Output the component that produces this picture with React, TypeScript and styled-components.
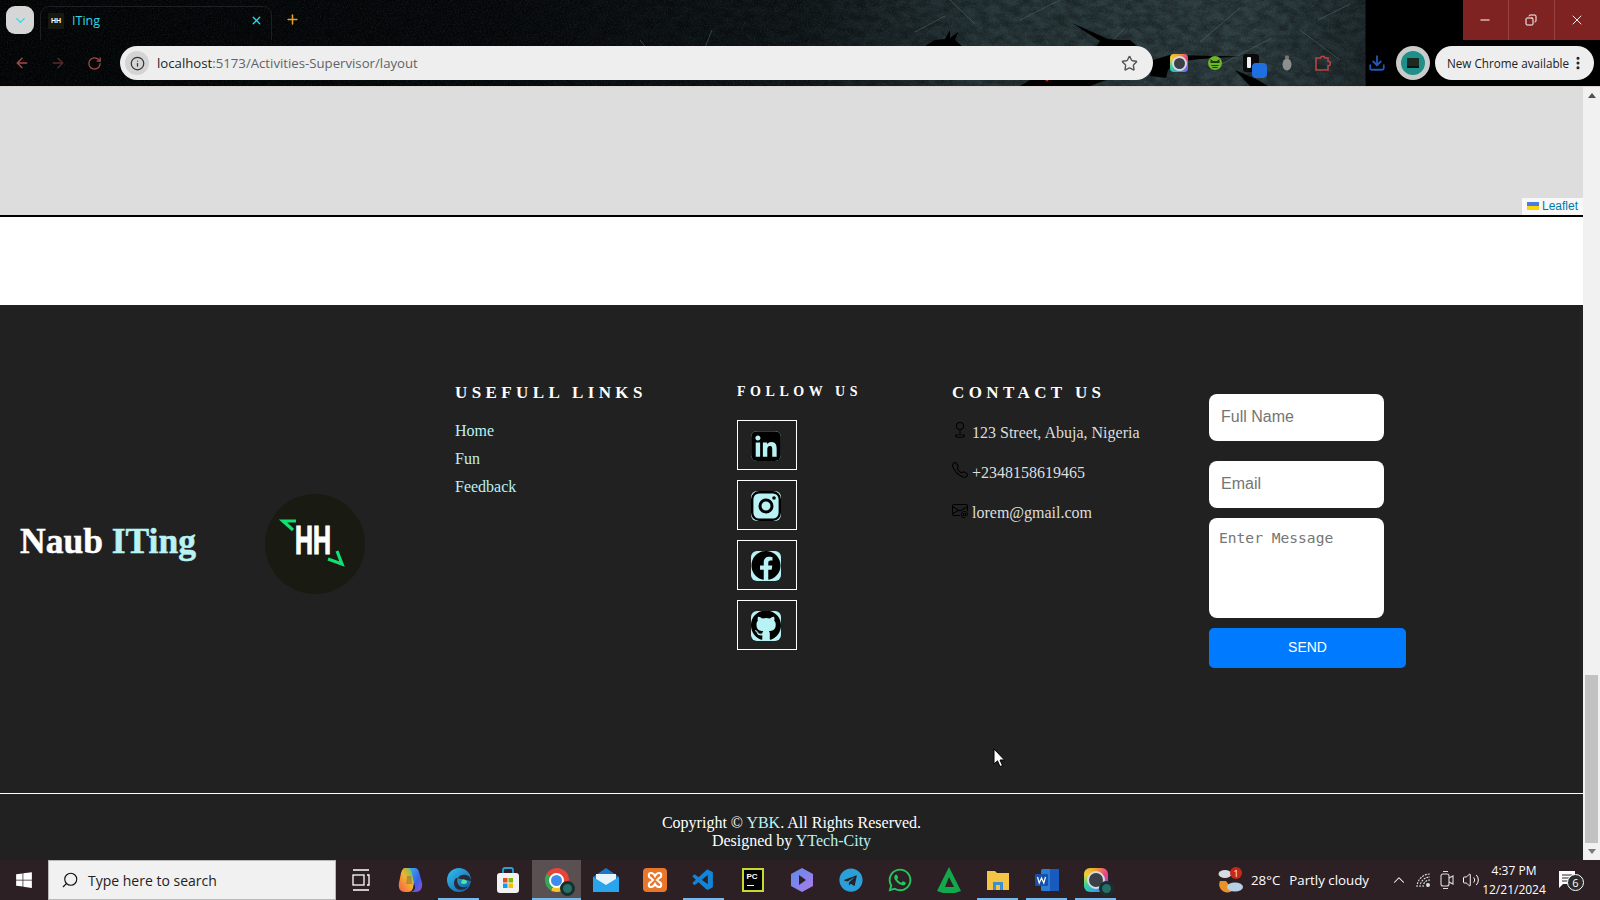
import React from 'react'
import styled, { createGlobalStyle } from 'styled-components'
import { ChevronDown, X, Plus, ArrowLeft, ArrowRight, RotateCw, Info, Star, Download, Minus, Copy, Search, ChevronUp, Volume2, MoreVertical } from 'lucide-react'
import { BsGeo, BsTelephone, BsEnvelopeAt } from 'react-icons/bs'
import { FaWindows, FaTelegram, FaWhatsapp, FaFacebook, FaGithub, FaLinkedin } from 'react-icons/fa'
import { VscVscode } from 'react-icons/vsc'

const GlobalStyle = createGlobalStyle`
  html, body {
    margin: 0;
    padding: 0;
    overflow: hidden;
    background: #212121;
  }
  * { box-sizing: border-box; }
`

const Screen = styled.div`
  width: 1600px;
  height: 900px;
  display: flex;
  flex-direction: column;
  overflow: hidden;
`

/* ---------- browser chrome ---------- */

const Chrome = styled.div`
  position: relative;
  height: 87px;
  flex: none;
  background:
    linear-gradient(90deg, #030506 0, #06090b 500px, #10171a 800px, #263538 980px, #2d3d40 1250px, #1f2b2e 1365px, #000 1366px, #000 100%);
  border-bottom: 1px solid #dcd4d0;
`

const Backdrop = styled.svg`
  position: absolute;
  inset: 0;
  width: 1600px;
  height: 86px;
`

const TabStrip = styled.div`
  position: relative;
  height: 40px;
  display: flex;
  align-items: flex-end;
  padding-left: 6px;
`

const TabMenu = styled.div`
  width: 28px;
  height: 28px;
  margin-bottom: 6px;
  border-radius: 9px;
  background: #d6d6d6;
  color: #2fd6e6;
  display: flex;
  align-items: center;
  justify-content: center;
`

const Tab = styled.div`
  width: 232px;
  height: 34px;
  margin-left: 6px;
  padding: 0 8px 6px 7px;
  display: flex;
  align-items: center;
  border: 1px solid #1b2022;
  border-bottom: 0;
  border-radius: 9px 9px 0 0;
  color: #2fd6e6;
  font: 12.5px "Open Sans", sans-serif;
`

const Favicon = styled.div`
  width: 16px;
  height: 16px;
  margin-right: 8px;
  background: #16190f;
  color: #fff;
  font: bold 7px "Liberation Sans", sans-serif;
  display: flex;
  align-items: center;
  justify-content: center;
`

const TabTitle = styled.span`
  flex: 1;
`

const NewTab = styled.div`
  margin: 0 0 13px 13px;
  color: #e0a030;
  display: flex;
`

const Toolbar = styled.div`
  position: relative;
  height: 46px;
  padding: 6px 0 6px 4px;
  display: flex;
  align-items: center;
`

const NavButton = styled.div<{ $dim?: boolean }>`
  width: 36px;
  height: 34px;
  display: flex;
  align-items: center;
  justify-content: center;
  color: ${p => (p.$dim ? '#5a2c2c' : '#a84a4a')};
`

const Omnibox = styled.div`
  width: 1033px;
  height: 34px;
  margin-left: 8px;
  padding: 0 15px 0 5px;
  border-radius: 17px;
  background: #eeeeee;
  display: flex;
  align-items: center;
  font: 13.2px "Open Sans", sans-serif;
  color: #5f6368;
`

const InfoChip = styled.div`
  width: 24px;
  height: 24px;
  margin-right: 8px;
  border-radius: 50%;
  background: #d4d4d4;
  color: #333;
  display: flex;
  align-items: center;
  justify-content: center;
`

const Host = styled.span`
  color: #1f1f1f;
`

const UrlPath = styled.span`
  flex: 1;
`

const ExtButton = styled.div`
  position: relative;
  width: 36px;
  height: 34px;
  display: flex;
  align-items: center;
  justify-content: center;
`

const Extensions = styled.div`
  margin-left: 8px;
  display: flex;
`

const ToolbarGap = styled.div`
  width: 18px;
`

const ExtBadge = styled.div`
  position: absolute;
  left: 19px;
  top: 17px;
  width: 15px;
  height: 15px;
  border-radius: 4px;
  background: #1f6fe0;
`

const Avatar = styled.div`
  width: 34px;
  height: 34px;
  margin-left: 1px;
  border-radius: 50%;
  background: #c9cccb;
  display: flex;
  align-items: center;
  justify-content: center;
`

const AvatarInner = styled.div`
  width: 24px;
  height: 24px;
  border-radius: 50%;
  background: #1f8f8a;
  display: flex;
  align-items: center;
  justify-content: center;
`

const AvatarScreen = styled.div`
  width: 12px;
  height: 10px;
  background: #1c2a22;
  border-bottom: 2px solid #0c1410;
`

const UpdatePill = styled.div`
  width: 159px;
  height: 34px;
  margin-left: 5px;
  padding: 0 8px 0 12px;
  border-radius: 17px;
  background: #eeeeee;
  color: #222;
  font: 11.7px "Open Sans", sans-serif;
  display: flex;
  align-items: center;
  justify-content: space-between;
  white-space: nowrap;
`

const WindowControls = styled.div`
  position: absolute;
  top: 0;
  right: 0;
  display: flex;
`

const WindowButton = styled.div`
  width: 46px;
  height: 40px;
  padding-right: 2px;
  background: #7f2222;
  border-left: 1px solid #96433f;
  color: #fff;
  display: flex;
  align-items: center;
  justify-content: center;
  &:first-child { border-left: 0; width: 45px; }
`

/* ---------- page ---------- */

const Viewport = styled.div`
  flex: 1;
  min-height: 0;
  display: flex;
`

const Page = styled.div`
  position: relative;
  flex: 1;
  min-width: 0;
  display: flex;
  flex-direction: column;
`

const MapPanel = styled.div`
  position: relative;
  height: 130px;
  flex: none;
  background: #dddddd;
  border-bottom: 2px solid #000;
`

const Attribution = styled.div`
  position: absolute;
  right: 0;
  bottom: 0;
  height: 17px;
  padding: 0 4px 1px 5px;
  width: 61px;
  background: rgba(255, 255, 255, 0.8);
  color: #0078a8;
  font: 12px "Liberation Sans", sans-serif;
  display: flex;
  align-items: center;
  gap: 3px;
`

const Flag = styled.svg`
  width: 12px;
  height: 8px;
  flex: none;
`

const Spacer = styled.div`
  height: 88px;
  flex: none;
  background: #fff;
`

const Footer = styled.footer`
  flex: 1;
  min-height: 0;
  background: #212121;
  color: #fff;
  font-family: "Liberation Serif", serif;
  display: flex;
  flex-direction: column;
`

const FooterMain = styled.div`
  height: 489px;
  flex: none;
  padding-top: 79px;
  display: flex;
  align-items: flex-start;
  border-bottom: 1px solid #fff;
`

const BrandColumn = styled.div`
  width: 455px;
  flex: none;
  margin-top: 110px;
  padding-left: 20px;
  display: flex;
  align-items: center;
`

const BrandName = styled.h1`
  width: 245px;
  margin: 0 0 6px;
  font: bold 35.5px "Liberation Serif", serif;
  -webkit-text-stroke: 0.5px currentColor;
  color: #fff;
  white-space: nowrap;
`

const Accent = styled.span`
  color: #b9f2f5;
`

const LogoBadge = styled.svg`
  width: 100px;
  height: 100px;
  flex: none;
`

const Column = styled.div<{ $w: number }>`
  width: ${p => p.$w}px;
  flex: none;
`

const Heading = styled.h4<{ $small?: boolean }>`
  margin: 0;
  height: 16px;
  line-height: ${p => (p.$small ? 16 : 18)}px;
  font-size: ${p => (p.$small ? 14 : 17)}px;
  font-weight: bold;
  letter-spacing: ${p => (p.$small ? 4.55 : 4.4)}px;
  white-space: nowrap;
`

const LinkList = styled.ul`
  list-style: none;
  margin: 22px 0 0;
  padding: 0;
  display: flex;
  flex-direction: column;
  gap: 10px;
`

const FooterLink = styled.li`
  height: 18px;
  line-height: 18px;
  font-size: 16px;
  color: #b9f2f5;
`

const SocialList = styled.div`
  margin-top: 20px;
  display: flex;
  flex-direction: column;
  gap: 10px;
`

const SocialBox = styled.div`
  width: 60px;
  height: 50px;
  padding: 1px 0 0 13px;
  border: 1px solid #fff;
  display: flex;
  align-items: center;
`

const SocialTile = styled.div`
  width: 30px;
  height: 30px;
  border-radius: 6px;
  background: #b9f2f5;
  color: #000;
  display: flex;
  align-items: center;
  justify-content: center;
  overflow: hidden;
`

const ContactList = styled.div`
  margin-top: 24px;
  display: flex;
  flex-direction: column;
  gap: 22px;
`

const ContactRow = styled.div`
  height: 18px;
  display: flex;
  align-items: center;
  font-size: 16px;
  color: #dddddd;
  white-space: nowrap;
`

const ContactIcon = styled.span`
  width: 20px;
  color: #000;
  display: flex;
  margin-top: -6px;
`

const Form = styled.form`
  width: 197px;
  margin-top: 10px;
  display: flex;
  flex-direction: column;
  align-items: flex-start;
`

const Field = styled.input<{ $gap: number }>`
  width: 175px;
  height: 47px;
  margin-bottom: ${p => p.$gap}px;
  padding: 0 12px 1px;
  border: 0;
  border-radius: 8px;
  background: #fff;
  outline: 0;
  font: 16px "Liberation Sans", sans-serif;
  &::placeholder { color: #757575; opacity: 1; }
`

const MessageBox = styled.textarea`
  width: 175px;
  height: 100px;
  margin-bottom: 10px;
  padding: 11px 10px;
  border: 0;
  border-radius: 8px;
  background: #fff;
  outline: 0;
  resize: none;
  font: 14.6px "DejaVu Sans Mono", "Liberation Mono", monospace;
  &::placeholder { color: #757575; opacity: 1; }
`

const SendButton = styled.button`
  width: 197px;
  height: 40px;
  padding: 0 0 2px;
  border: 0;
  border-radius: 5px;
  background: #007bff;
  color: #fff;
  font: 14px "Liberation Sans", sans-serif;
`

const Copyright = styled.div`
  padding-top: 20px;
  text-align: center;
  font-size: 16px;
  line-height: 18px;
`

const Cursor = styled.svg`
  position: absolute;
  left: 993px;
  top: 661px;
  width: 13px;
  height: 20px;
`

const Scrollbar = styled.div`
  width: 17px;
  flex: none;
  background: #f1f1f1;
  display: flex;
  flex-direction: column;
  align-items: center;
`

const ScrollArrow = styled.div<{ $down?: boolean }>`
  height: 17px;
  width: 100%;
  display: flex;
  align-items: center;
  justify-content: center;
  &::after {
    content: '';
    border-left: 4px solid transparent;
    border-right: 4px solid transparent;
    ${p => (p.$down ? 'border-top: 5px solid #7a7a7a;' : 'border-bottom: 5px solid #505050;')}
  }
`

const ScrollTrack = styled.div`
  flex: 1;
  width: 100%;
  padding: 571px 2px 0;
`

const ScrollThumb = styled.div`
  height: 168px;
  background: #c1c1c1;
`

/* ---------- taskbar ---------- */

const Taskbar = styled.div`
  height: 40px;
  flex: none;
  background: #2c2024;
  color: #fff;
  display: flex;
  align-items: center;
`

const StartButton = styled.div`
  width: 48px;
  height: 40px;
  display: flex;
  align-items: center;
  justify-content: center;
`

const SearchBox = styled.div`
  width: 288px;
  height: 40px;
  padding-left: 12px;
  background: #f1f1f1;
  border: 1px solid #b8b8b8;
  color: #222;
  font: 14px "Open Sans", sans-serif;
  display: flex;
  align-items: center;
  gap: 9px;
`

const MirroredIcon = styled.span`
  display: flex;
  transform: scaleX(-1);
  color: #111;
`

const TaskIcons = styled.div`
  display: flex;
`

const TaskIcon = styled.div<{ $open?: boolean; $active?: boolean }>`
  position: relative;
  width: 49px;
  height: 40px;
  display: flex;
  align-items: center;
  justify-content: center;
  background: ${p => (p.$active ? '#5a5052' : 'transparent')};
  &::after {
    content: '';
    position: absolute;
    left: ${p => (p.$active ? 0 : 4)}px;
    right: ${p => (p.$active ? 0 : 4)}px;
    bottom: 0;
    height: ${p => (p.$open ? 2 : 0)}px;
    background: #76b9ed;
  }
`

const ChromeBall = styled.div`
  position: relative;
  width: 24px;
  height: 24px;
  border-radius: 50%;
  background: conic-gradient(#e8443a 0 120deg, #f8c42a 120deg 210deg, #36a853 210deg 300deg, #e8443a 300deg);
  display: flex;
  align-items: center;
  justify-content: center;
  &::before {
    content: '';
    width: 11px;
    height: 11px;
    border-radius: 50%;
    background: #3f8cf0;
    border: 2px solid #fff;
  }
`

const ProfileDot = styled.div`
  position: absolute;
  left: 28px;
  top: 21px;
  width: 15px;
  height: 15px;
  border-radius: 50%;
  background: #2a6e68;
  border: 3px solid #16312d;
`

const RingTile = styled.div`
  width: 24px;
  height: 24px;
  border-radius: 6px;
  background: conic-gradient(#f0a030, #e83e8c, #8a5cf0, #30a0f0, #30d0a0, #f0d030, #f0a030);
  display: flex;
  align-items: center;
  justify-content: center;
  &::before {
    content: '';
    width: 14px;
    height: 14px;
    border-radius: 50%;
    background: #3b4048;
    border: 2px solid #d8dade;
  }
`

const ExtRing = styled(RingTile)`
  width: 18px;
  height: 18px;
  border-radius: 4px;
  &::before { width: 11px; height: 11px; }
`

const PyTile = styled.div`
  width: 22px;
  height: 24px;
  padding: 2px 3px;
  background: #000;
  border: 2px solid #c6d92e;
  color: #fff;
  font: bold 8px/9px "Liberation Sans", sans-serif;
  &::after {
    content: '';
    display: block;
    width: 7px;
    height: 1px;
    margin-top: 4px;
    background: #fff;
  }
`

const Tray = styled.div`
  margin-left: auto;
  margin-right: 13px;
  display: flex;
  align-items: center;
  height: 40px;
`

const Weather = styled.div`
  width: 169px;
  display: flex;
  align-items: center;
  font: 13.3px "Open Sans", sans-serif;
  white-space: nowrap;
`

const WeatherTemp = styled.span`
  margin: 0 9px 0 7px;
`

const TrayIcon = styled.div`
  width: 24px;
  display: flex;
  align-items: center;
  justify-content: center;
`

const Clock = styled.div`
  width: 66px;
  margin-left: -2px;
  font: 12px/19px "Open Sans", sans-serif;
  text-align: center;
  white-space: nowrap;
`

const Notification = styled.div`
  position: relative;
  width: 40px;
  display: flex;
  align-items: center;
  justify-content: center;
`

const NotificationCount = styled.div`
  position: absolute;
  left: 20px;
  top: 4px;
  width: 17px;
  height: 17px;
  border-radius: 50%;
  border: 1px solid #fff;
  background: #2c2c2c;
  font: 11px/15px "Open Sans", sans-serif;
  text-align: center;
`

function Social({ name }: { name: string }) {
  if (name === 'linkedin') return <SocialTile><FaLinkedin size={34} /></SocialTile>
  if (name === 'facebook') return <SocialTile><FaFacebook size={31} /></SocialTile>
  if (name === 'github') return <SocialTile><FaGithub size={31} /></SocialTile>
  return (
    <SocialTile>
      <svg width="30" height="30" viewBox="0 0 30 30">
        <rect x="1.2" y="1.2" width="27.6" height="27.6" rx="7" fill="none" stroke="#000" strokeWidth="2.4" />
        <circle cx="15" cy="15" r="6" fill="none" stroke="#000" strokeWidth="3" />
        <circle cx="23" cy="7" r="1.8" fill="#000" />
      </svg>
    </SocialTile>
  )
}

export default function App() {
  return (
    <Screen>
      <GlobalStyle />
      <Chrome>
        <Backdrop viewBox="0 0 1600 86">
          <defs>
            <filter id="grain" x="0" y="0" width="100%" height="100%">
              <feTurbulence type="fractalNoise" baseFrequency="0.09 0.14" numOctaves="4" seed="7" />
              <feColorMatrix values="0 0 0 0 0  0 0 0 0 0  0 0 0 0 0  2.4 0 0 0 -0.75" />
            </filter>
            <filter id="fleck" x="0" y="0" width="100%" height="100%">
              <feTurbulence type="fractalNoise" baseFrequency="0.7" numOctaves="2" seed="3" />
              <feColorMatrix values="0 0 0 0 0.5  0 0 0 0 0.62  0 0 0 0 0.64  1.6 0 0 0 -0.7" />
            </filter>
          </defs>
          <rect width="1366" height="86" filter="url(#grain)" opacity="0.3" />
          <rect width="1366" height="86" filter="url(#fleck)" opacity="0.12" />
          <g stroke="#5a6e70" strokeWidth="1" fill="none" opacity="0.5">
            <path d="M915 32 L945 16 M950 0 L975 24 M1020 20 L1060 0 M1090 62 L1125 28 M1200 42 L1240 8 M1300 30 L1340 60 M1210 70 L1272 38 M700 60 L712 30 M640 40 L660 66 M1318 20 L1350 4" />
          </g>
          <g fill="#000">
            <path d="M1072 23 L1108 39 L1118 40 L1130 40 L1138 47 L1096 47 L1100 41 Z" />
            <path d="M925 46 L935 40 L945 39 L950 30 L950 38 L958 32 L955 40 L962 46 Z" />
            <path d="M1153 60 L1170 55 L1240 56.5 L1200 59 L1175 62 L1168 70 L1166 78 L1150 76 Z" />
            <path d="M1235 70 L1256 79 L1268 86 L1250 86 Z" />
            <path d="M1020 86 L1030 80 L1106 80 L1090 86 Z" />
          </g>
          <circle cx="1047" cy="80" r="1.5" fill="#c02020" />
        </Backdrop>
        <TabStrip>
          <TabMenu><ChevronDown size={15} /></TabMenu>
          <Tab>
            <Favicon>HH</Favicon>
            <TabTitle>ITing</TabTitle>
            <X size={13} strokeWidth={2.5} />
          </Tab>
          <NewTab><Plus size={15} strokeWidth={2.5} /></NewTab>
          <WindowControls>
            <WindowButton><Minus size={14} /></WindowButton>
            <WindowButton><Copy size={12} style={{ transform: 'scaleX(-1)' }} /></WindowButton>
            <WindowButton><X size={16} strokeWidth={1.4} /></WindowButton>
          </WindowControls>
        </TabStrip>
        <Toolbar>
          <NavButton><ArrowLeft size={16} /></NavButton>
          <NavButton $dim><ArrowRight size={16} /></NavButton>
          <NavButton><RotateCw size={15} /></NavButton>
          <Omnibox>
            <InfoChip><Info size={15} /></InfoChip>
            <UrlPath><Host>localhost</Host>:5173/Activities-Supervisor/layout</UrlPath>
            <Star size={17} color="#555" />
          </Omnibox>
          <Extensions>
            <ExtButton><ExtRing /></ExtButton>
            <ExtButton>
              <svg width="16" height="16" viewBox="0 0 16 16">
                <circle cx="8" cy="8" r="7" fill="#6fb52c" />
                <path d="M3.5 4 L6 6 H10 L12.5 4 V8 H3.5 Z" fill="#1d3a10" />
                <path d="M4.5 10.5h7M5.5 12.5h5" stroke="#1d3a10" strokeWidth="1.2" />
              </svg>
            </ExtButton>
            <ExtButton>
              <svg width="16" height="18" viewBox="0 0 16 18">
                <rect width="16" height="18" rx="3" fill="#0a0a0a" />
                <rect x="4" y="3" width="4" height="11" rx="1" fill="#eee" />
              </svg>
              <ExtBadge />
            </ExtButton>
            <ExtButton>
              <svg width="10" height="16" viewBox="0 0 10 16">
                <ellipse cx="5" cy="9.5" rx="4.5" ry="6" fill="#8d8f8f" />
                <rect x="3" y="0.5" width="4" height="3.5" rx="1" fill="#777" />
              </svg>
            </ExtButton>
            <ExtButton>
              <svg width="18" height="18" viewBox="0 0 18 18" fill="none" stroke="#b84444" strokeWidth="1.6">
                <path d="M2 4 H6.5 A2.3 2.3 0 0 1 11 4 H14 V7.2 A2.3 2.3 0 0 1 14 11.8 V16 H2 Z" />
              </svg>
            </ExtButton>
          </Extensions>
          <ToolbarGap />
          <ExtButton><Download size={18} color="#2358b8" strokeWidth={2.4} /></ExtButton>
          <Avatar><AvatarInner><AvatarScreen /></AvatarInner></Avatar>
          <UpdatePill>
            New Chrome available
            <MoreVertical size={16} strokeWidth={2.6} />
          </UpdatePill>
        </Toolbar>
      </Chrome>

      <Viewport>
        <Page>
          <MapPanel>
            <Attribution>
              <Flag viewBox="0 0 12 8">
                <rect width="12" height="4" fill="#4c7be1" />
                <rect y="4" width="12" height="4" fill="#ffd500" />
              </Flag>
              Leaflet
            </Attribution>
          </MapPanel>
          <Spacer />
          <Footer>
            <FooterMain>
              <BrandColumn>
                <BrandName>Naub <Accent>ITing</Accent></BrandName>
                <LogoBadge viewBox="0 0 100 100">
                  <circle cx="50" cy="50" r="50" fill="#191a12" />
                  <text x="30" y="60" fontFamily="Liberation Sans" fontWeight="bold" fontSize="40" fill="#fff" stroke="#fff" strokeWidth="1.2" textLength="36" lengthAdjust="spacingAndGlyphs">HH</text>
                  <path d="M31 27 L18 27 L28 36" fill="none" stroke="#12e070" strokeWidth="3.2" />
                  <path d="M63 65 L77 70 L72 57" fill="none" stroke="#12e070" strokeWidth="3.2" />
                </LogoBadge>
              </BrandColumn>
              <Column $w={282}>
                <Heading>USEFULL LINKS</Heading>
                <LinkList>
                  <FooterLink>Home</FooterLink>
                  <FooterLink>Fun</FooterLink>
                  <FooterLink>Feedback</FooterLink>
                </LinkList>
              </Column>
              <Column $w={215}>
                <Heading $small>FOLLOW US</Heading>
                <SocialList>
                  {['linkedin', 'instagram', 'facebook', 'github'].map(name => (
                    <SocialBox key={name}><Social name={name} /></SocialBox>
                  ))}
                </SocialList>
              </Column>
              <Column $w={257}>
                <Heading>CONTACT US</Heading>
                <ContactList>
                  <ContactRow><ContactIcon><BsGeo size={16} /></ContactIcon>123 Street, Abuja, Nigeria</ContactRow>
                  <ContactRow><ContactIcon><BsTelephone size={16} /></ContactIcon>+2348158619465</ContactRow>
                  <ContactRow><ContactIcon><BsEnvelopeAt size={16} /></ContactIcon>lorem@gmail.com</ContactRow>
                </ContactList>
              </Column>
              <Form>
                <Field $gap={20} placeholder="Full Name" />
                <Field $gap={10} placeholder="Email" />
                <MessageBox placeholder="Enter Message" />
                <SendButton type="button">SEND</SendButton>
              </Form>
            </FooterMain>
            <Copyright>
              Copyright © <Accent>YBK</Accent>. All Rights Reserved.<br />
              Designed by <Accent>YTech-City</Accent>
            </Copyright>
          </Footer>
          <Cursor viewBox="0 0 13 20">
            <path d="M1 1 L1 16 L4.5 12.8 L7 18.5 L9.5 17.5 L7 12 L11.5 12 Z" fill="#fff" stroke="#000" strokeWidth="1" />
          </Cursor>
        </Page>
        <Scrollbar>
          <ScrollArrow />
          <ScrollTrack><ScrollThumb /></ScrollTrack>
          <ScrollArrow $down />
        </Scrollbar>
      </Viewport>

      <Taskbar>
        <StartButton><FaWindows size={18} /></StartButton>
        <SearchBox>
          <MirroredIcon><Search size={18} strokeWidth={1.5} /></MirroredIcon>
          Type here to search
        </SearchBox>
        <TaskIcons>
          <TaskIcon>
            <svg width="18" height="24" viewBox="0 0 18 24" fill="none" stroke="#fff" strokeWidth="1.3">
              <path d="M1 2h16M1 22h16" />
              <rect x="1" y="7" width="11" height="10" />
              <path d="M15 7h2v10h-2" />
            </svg>
          </TaskIcon>
          <TaskIcon>
            <svg width="26" height="26" viewBox="0 0 26 26">
              <defs>
                <linearGradient id="copA" x1="0" y1="0" x2="1" y2="1">
                  <stop offset="0" stopColor="#35b8e8" />
                  <stop offset="0.6" stopColor="#3a62e8" />
                  <stop offset="1" stopColor="#a848d8" />
                </linearGradient>
                <linearGradient id="copB" x1="0" y1="1" x2="1" y2="0">
                  <stop offset="0" stopColor="#f05a4a" />
                  <stop offset="0.5" stopColor="#f6b030" />
                  <stop offset="1" stopColor="#38c878" />
                </linearGradient>
              </defs>
              <path d="M8 1 H15 C17 1 18 2 19 5 L16 21 C15 24 13 25 11 25 H8 C3 25 1 21 2 16 L4 6 C5 3 6 1 8 1 Z" fill="url(#copB)" />
              <path d="M11 1 H18 C20 1 21 2 22 5 L25 16 C26 21 23 25 19 25 H14 C17 24 18 22 18 20 L15 7 C14 3 13 1 11 1 Z" fill="url(#copA)" />
              <path d="M10 9 L14 9 L15 17 L9 17 Z" fill="#2c2024" opacity="0.25" />
            </svg>
          </TaskIcon>
          <TaskIcon $open>
            <svg width="26" height="26" viewBox="0 0 26 26">
              <defs>
                <linearGradient id="edge" x1="0" y1="0" x2="1" y2="1">
                  <stop offset="0" stopColor="#35c1f1" />
                  <stop offset="1" stopColor="#0c59a4" />
                </linearGradient>
              </defs>
              <circle cx="13" cy="13" r="12" fill="url(#edge)" />
              <path d="M25 14 C25 9 20 7 16 8 C12 9 10 13 12 17 C14 21 19 21 22 19 C18 25 8 24 8 16 C8 14 9 12 10 11" fill="#2c2024" opacity="0.9" />
              <path d="M16 13 C18 12 21 13 21 15 C21 17 17 18 15 16 Z" fill="#50e6a0" />
            </svg>
          </TaskIcon>
          <TaskIcon>
            <svg width="24" height="26" viewBox="0 0 24 26">
              <path d="M7 7 V3 Q7 1 9 1 H15 Q17 1 17 3 V7" fill="none" stroke="#2a9fd8" strokeWidth="1.8" />
              <rect x="1" y="6" width="22" height="20" rx="3" fill="#f2f2f2" />
              <rect x="7" y="11" width="4.5" height="4.5" fill="#e8492e" />
              <rect x="12.5" y="11" width="4.5" height="4.5" fill="#7fba00" />
              <rect x="7" y="16.5" width="4.5" height="4.5" fill="#00a4ef" />
              <rect x="12.5" y="16.5" width="4.5" height="4.5" fill="#ffb900" />
            </svg>
          </TaskIcon>
          <TaskIcon $open $active>
            <ChromeBall />
            <ProfileDot />
          </TaskIcon>
          <TaskIcon>
            <svg width="26" height="24" viewBox="0 0 26 24">
              <path d="M13 0 L26 9 V24 H0 V9 Z" fill="#1a78c8" />
              <path d="M3 6 H23 V12 L13 18 L3 12 Z" fill="#e8f4fc" />
              <path d="M0 9 L13 17 L26 9 V24 H0 Z" fill="#2aa4ec" />
            </svg>
          </TaskIcon>
          <TaskIcon>
            <svg width="24" height="24" viewBox="0 0 24 24">
              <rect width="24" height="24" rx="4" fill="#e8762b" />
              <path d="M8 5 C5 5 5 9 8 10 L10 12 L8 14 C5 15 5 19 8 19 C10 19 11 18 12 16 C13 18 14 19 16 19 C19 19 19 15 16 14 L14 12 L16 10 C19 9 19 5 16 5 C14 5 13 6 12 8 C11 6 10 5 8 5 Z" fill="none" stroke="#fff" strokeWidth="2" />
            </svg>
          </TaskIcon>
          <TaskIcon $open><VscVscode size={25} color="#1285d8" /></TaskIcon>
          <TaskIcon><PyTile>PC</PyTile></TaskIcon>
          <TaskIcon>
            <svg width="24" height="26" viewBox="0 0 24 26">
              <defs>
                <linearGradient id="hex" x1="0" y1="0" x2="1" y2="1">
                  <stop offset="0" stopColor="#5a8cf0" />
                  <stop offset="1" stopColor="#b07ae8" />
                </linearGradient>
              </defs>
              <path d="M12 1 L23 7 V19 L12 25 L1 19 V7 Z" fill="url(#hex)" />
              <path d="M9 8 L16 13 L9 18 Z" fill="#2c2024" />
            </svg>
          </TaskIcon>
          <TaskIcon><FaTelegram size={24} color="#2a9fd8" /></TaskIcon>
          <TaskIcon><FaWhatsapp size={26} color="#25c65e" /></TaskIcon>
          <TaskIcon>
            <svg width="24" height="26" viewBox="0 0 24 26">
              <path d="M12 0 L24 24 L18 26 H6 L0 24 Z" fill="#12a84c" />
              <path d="M12 10 L17 20 H8 Z" fill="#2c2024" />
            </svg>
          </TaskIcon>
          <TaskIcon $open>
            <svg width="24" height="24" viewBox="0 0 24 24">
              <path d="M1 3 H9 L11 5 H23 V22 H1 Z" fill="#f6c445" />
              <rect x="7" y="14" width="10" height="8" fill="#3a8fd0" />
              <rect x="10" y="17" width="4" height="5" fill="#f6c445" />
            </svg>
          </TaskIcon>
          <TaskIcon $open>
            <svg width="26" height="24" viewBox="0 0 26 24">
              <rect x="7" y="1" width="18" height="22" rx="1.5" fill="#2b7cd3" />
              <rect x="16" y="1" width="9" height="22" fill="#185abd" />
              <rect x="1" y="6" width="13" height="12" rx="1" fill="#1650ac" />
              <path d="M3.5 9 L5.2 15 L7.5 10 L9.8 15 L11.5 9" fill="none" stroke="#fff" strokeWidth="1.2" />
            </svg>
          </TaskIcon>
          <TaskIcon $open>
            <RingTile />
            <ProfileDot />
          </TaskIcon>
        </TaskIcons>
        <Tray>
          <Weather>
            <svg width="26" height="28" viewBox="0 0 26 28">
              <ellipse cx="7" cy="8" rx="6.5" ry="4" fill="#d8dce2" />
              <path d="M2 15 a8 8 0 0 0 13 9 L8 15 Z" fill="#e8922c" />
              <ellipse cx="17" cy="21" rx="8" ry="4.5" fill="#b8cfe8" />
              <circle cx="18" cy="7" r="6" fill="#c8281c" />
              <text x="18" y="10.5" fontFamily="Open Sans" fontSize="9" fill="#fff" textAnchor="middle">1</text>
            </svg>
            <WeatherTemp>28°C</WeatherTemp>
            Partly cloudy
          </Weather>
          <TrayIcon><ChevronUp size={18} strokeWidth={1.4} /></TrayIcon>
          <TrayIcon>
            <svg width="16" height="16" viewBox="0 0 16 16" fill="none" stroke="#ddd" strokeWidth="1.1">
              <path d="M2 15 A13 13 0 0 1 15 2 M5 15 A10 10 0 0 1 15 5 M8 15 A7 7 0 0 1 15 8" strokeDasharray="2 1" />
              <circle cx="13" cy="13" r="1.4" fill="#ddd" />
            </svg>
          </TrayIcon>
          <TrayIcon>
            <svg width="14" height="20" viewBox="0 0 14 20" fill="none" stroke="#ddd" strokeWidth="1.1">
              <rect x="1" y="4" width="8" height="12" rx="2" />
              <path d="M9 8 L13 6 V14 L9 12" />
              <path d="M3 1.5 H8 M3 18.5 H8" />
            </svg>
          </TrayIcon>
          <TrayIcon><Volume2 size={18} strokeWidth={1.3} /></TrayIcon>
          <Clock>4:37 PM<br />12/21/2024</Clock>
          <Notification>
            <svg width="18" height="20" viewBox="0 0 18 20">
              <path d="M1 1 H17 V14 H5 L1 18 Z" fill="#fff" />
              <path d="M4 5 H14 M4 8 H14 M4 11 H10" stroke="#2c2024" strokeWidth="1" />
            </svg>
            <NotificationCount>6</NotificationCount>
          </Notification>
        </Tray>
      </Taskbar>
    </Screen>
  )
}
